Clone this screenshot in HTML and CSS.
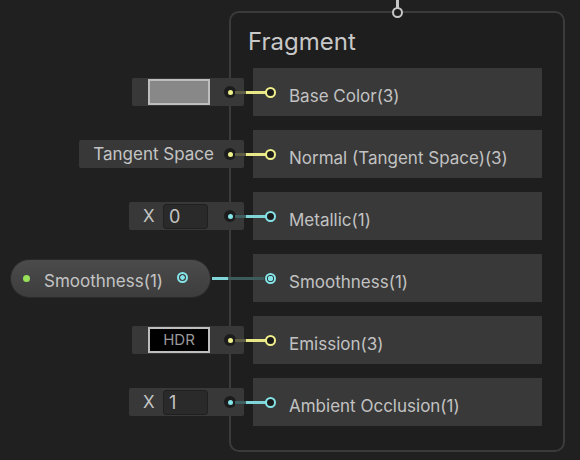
FILE: index.html
```html
<!DOCTYPE html>
<html>
<head>
<meta charset="utf-8">
<link rel="stylesheet" href="styles.css">
</head>
<body>
<div class="stage">
  <div class="top-wire"></div>
  <div class="block">
    <div class="top-port"></div>
    <div class="title">Fragment</div>
    <div class="rows">
      <div class="row">
        <div class="field">
          <div class="swatch gray"></div>
          <span class="dot yellow"></span>
        </div>
        <div class="wire yellow-wire"></div>
        <span class="port yellow-port"></span>
        <span class="label">Base Color(3)</span>
      </div>
      <div class="row">
        <div class="field">
          <span class="field-text">Tangent Space</span>
          <span class="dot yellow"></span>
        </div>
        <div class="wire yellow-wire"></div>
        <span class="port yellow-port"></span>
        <span class="label">Normal (Tangent Space)(3)</span>
      </div>
      <div class="row">
        <div class="field">
          <span class="axis">X</span>
          <span class="num">0</span>
          <span class="dot blue"></span>
        </div>
        <div class="wire blue-wire"></div>
        <span class="port blue-port"></span>
        <span class="label">Metallic(1)</span>
      </div>
      <div class="row">
        <div class="pill">
          <span class="pill-dot"></span>
          <span class="pill-text">Smoothness(1)</span>
          <span class="pill-port"></span>
        </div>
        <div class="wire long-wire"></div>
        <span class="port blue-port filled"></span>
        <span class="label">Smoothness(1)</span>
      </div>
      <div class="row">
        <div class="field">
          <div class="swatch hdr">HDR</div>
          <span class="dot yellow"></span>
        </div>
        <div class="wire yellow-wire"></div>
        <span class="port yellow-port"></span>
        <span class="label">Emission(3)</span>
      </div>
      <div class="row">
        <div class="field">
          <span class="axis">X</span>
          <span class="num">1</span>
          <span class="dot blue"></span>
        </div>
        <div class="wire blue-wire"></div>
        <span class="port blue-port"></span>
        <span class="label">Ambient Occlusion(1)</span>
      </div>
    </div>
  </div>
</div>
</body>
</html>
```
FILE: styles.css
```css
html, body {
  margin: 0;
  padding: 0;
  background: #202020;
}
body {
  width: 580px;
  height: 460px;
  overflow: hidden;
  font-family: Inter, "Noto Sans", sans-serif;
  color: #c4c4c4;
}
.stage {
  position: relative;
  width: 580px;
  height: 460px;
}
.top-wire {
  position: absolute;
  left: 396px;
  top: 0;
  width: 3px;
  height: 8px;
  background: #c6c6c6;
}
.block {
  position: absolute;
  left: 229px;
  top: 11px;
  width: 336px;
  height: 441px;
  box-sizing: border-box;
  border: 2px solid #3b3b3b;
  border-radius: 10px;
  background: #1e1e1e;
}
.top-port {
  position: absolute;
  left: 161px;
  top: -6px;
  width: 11px;
  height: 11px;
  box-sizing: border-box;
  border: 2px solid #c6c6c6;
  border-radius: 50%;
  background: #1e1e1e;
}
.title {
  font-size: 24px;
  line-height: 28px;
  padding: 15px 0 0 17px;
  color: #c8c8c8;
  height: 40px;
  box-sizing: border-box;
  margin-bottom: 15px;
}
.rows {
  display: flex;
  flex-direction: column;
  gap: 14px;
  padding-left: 22px;
}
.row {
  position: relative;
  width: 289px;
  height: 48px;
  background: #393939;
  display: flex;
  align-items: center;
}
.label {
  margin-left: 36px;
  margin-top: 7px;
  font-size: 17px;
  color: #c2c2c2;
  white-space: nowrap;
}
.port {
  position: absolute;
  left: 12px;
  top: 19px;
  width: 11px;
  height: 11px;
  box-sizing: border-box;
  border-radius: 50%;
  border: 2px solid;
  background: #1c1c1c;
}
.yellow-port { border-color: #f0f08c; }
.blue-port { border-color: #84e4e7; }
.port.filled {
  background: radial-gradient(circle, #84e4e7 0 2.5px, #2a2a2a 3px);
}
.wire {
  position: absolute;
  top: 23px;
  height: 3px;
}
.yellow-wire {
  left: -18px;
  width: 32px;
  background: linear-gradient(to right, #5d5d45 0 11px, #e8e888 11px);
}
.blue-wire {
  left: -18px;
  width: 32px;
  background: linear-gradient(to right, #3f5e5f 0 11px, #7fd5d8 11px);
}
.long-wire {
  left: -41px;
  width: 52px;
  background: linear-gradient(to right, #7fd5d8 0 16px, #3e5b5c 16px);
}
.field {
  position: absolute;
  right: calc(100% + 9px);
  top: 10px;
  height: 28px;
  background: #383838;
  border-radius: 2px;
  display: flex;
  align-items: center;
  padding-right: 34px;
  white-space: nowrap;
}
.dot {
  position: absolute;
  right: 8px;
  top: 8px;
  width: 12px;
  height: 12px;
  border-radius: 50%;
  background: #1c1c1c;
}
.dot::after {
  content: "";
  position: absolute;
  left: 3.5px;
  top: 3.5px;
  width: 5px;
  height: 5px;
  border-radius: 50%;
}
.dot.yellow::after { background: #f0f08c; }
.dot.blue::after { background: #84e4e7; }
.swatch {
  width: 62px;
  height: 26px;
  box-sizing: border-box;
  margin-left: 16px;
  border: 2px solid #bdbdbd;
}
.swatch.gray { background: #888888; }
.swatch.hdr {
  background: #000;
  color: #9a9a9a;
  font-size: 15px;
  line-height: 22px;
  text-align: center;
}
.field-text {
  font-size: 17px;
  margin-left: 14px;
  margin-right: -4px;
}
.axis {
  font-size: 17px;
  margin-left: 14px;
  width: 20px;
}
.num {
  width: 45px;
  height: 25px;
  box-sizing: border-box;
  background: #2a2a2a;
  border: 1px solid #202020;
  border-radius: 3px;
  font-size: 18px;
  line-height: 23px;
  padding-left: 5px;
  margin-right: 2px;
}
.pill {
  position: absolute;
  right: calc(100% + 42px);
  top: 5px;
  width: 201px;
  height: 39px;
  box-sizing: border-box;
  border: 1px solid #2b2b2b;
  border-radius: 20px;
  background: linear-gradient(#4b4b4b, #3d3d3d);
  display: flex;
  align-items: center;
}
.pill-dot {
  width: 7px;
  height: 7px;
  border-radius: 50%;
  background: #98e25a;
  margin-left: 12px;
}
.pill-text {
  font-size: 17px;
  margin-left: 14px;
  margin-top: 5px;
  white-space: nowrap;
}
.pill-port {
  position: absolute;
  left: 166px;
  top: 12px;
  width: 11px;
  height: 11px;
  box-sizing: border-box;
  border: 2px solid #84e4e7;
  border-radius: 50%;
  background: radial-gradient(circle, #84e4e7 0 2px, #3d3d3d 2.5px);
}
```
